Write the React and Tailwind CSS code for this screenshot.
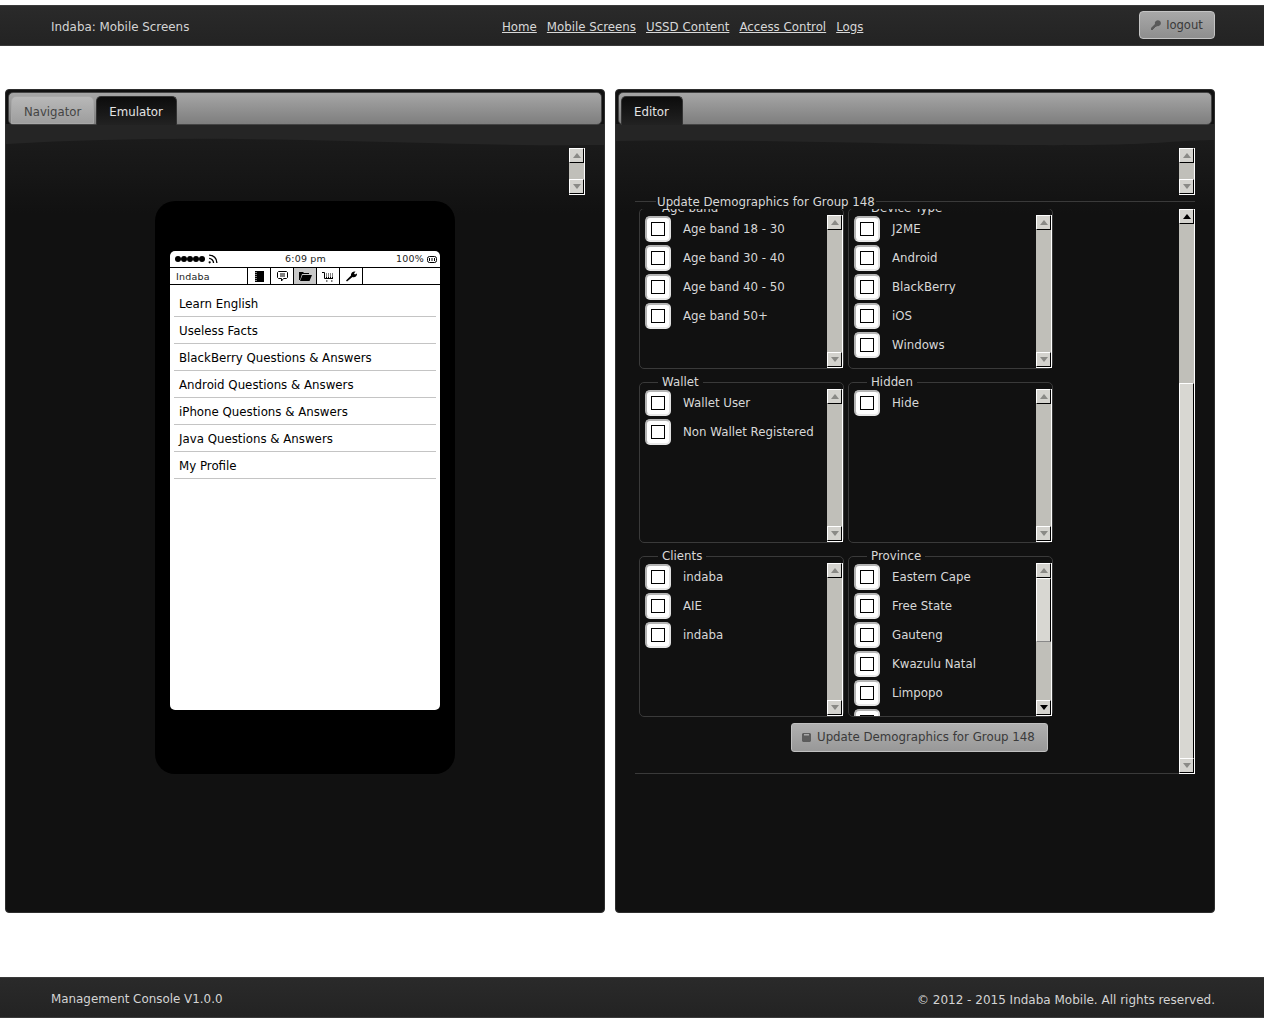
const font = { fontFamily: '"DejaVu Sans", sans-serif' };

function Arrow({ dir, dark }) {
  const cls = dark ? "border-b-black" : "border-b-[#8a8a86]";
  const clsD = dark ? "border-t-black" : "border-t-[#8a8a86]";
  return dir === "up" ? (
    <span className={`w-0 h-0 border-x-[4px] border-x-transparent border-b-[5px] ${cls}`} />
  ) : (
    <span className={`w-0 h-0 border-x-[4px] border-x-transparent border-t-[5px] ${clsD}`} />
  );
}

function SBtn({ dir, dark }) {
  return (
    <div className="h-[15px] w-[15px] shrink-0 flex items-center justify-center bg-[#d4d3ce] border-t border-l border-t-white border-l-white border-r border-b border-r-black border-b-black">
      <Arrow dir={dir} dark={dark} />
    </div>
  );
}

function Scrollbar({ upDark, downDark, thumb, className = "" }) {
  return (
    <div className={`w-[16px] shrink-0 flex flex-col bg-[#c0bfb9] border-r border-b border-white ${className}`}>
      <SBtn dir="up" dark={upDark} />
      {thumb ? <div className="flex-1 flex flex-col">{thumb}</div> : <div className="flex-1" />}
      <SBtn dir="down" dark={downDark} />
    </div>
  );
}

function Check({ label }) {
  return (
    <div className="flex items-center h-[26px] mb-[3px] shrink-0">
      <div className="w-[26px] h-[26px] bg-white rounded-[5px] border-2 border-[#b4b4b4] border-b-[#e8e8e8] border-r-[#e0e0e0] flex items-center justify-center shrink-0">
        <div className="w-[14px] h-[14px] border border-black bg-white" />
      </div>
      <span className="ml-3 mt-[1px] text-[11.8px] text-[#d8d8d8] whitespace-nowrap">{label}</span>
    </div>
  );
}

function Group({ title, items, thumb, downDark }) {
  return (
    <fieldset className="w-[205px] h-[168px] border border-[#3a3a3a] rounded-[5px] pl-[5px] min-w-0">
      <legend className="ml-[13px] px-[4px] text-[11.8px] leading-[15px] text-[#d8d8d8]">{title}</legend>
      <div className="flex h-[153px] -mt-[1px]">
        <div className="flex-1 overflow-hidden pt-[1px] min-w-0">
          {items.map((i, k) => (
            <Check key={k} label={i} />
          ))}
        </div>
        <Scrollbar thumb={thumb} downDark={downDark} />
      </div>
    </fieldset>
  );
}

function PanelTop({ tabs }) {
  return (
    <div className="mx-[2px] mt-[2px] h-[33px] rounded-[5px] border border-[#444] bg-gradient-to-b from-[#a6a6a6] to-[#7e7e7e] flex items-end pl-[2px]">
      {tabs}
    </div>
  );
}

function Tab({ active, children }) {
  return active ? (
    <div className="h-[29px] pl-[12px] pr-[13px] mr-[2px] rounded-t-[5px] bg-gradient-to-b from-[#0c0c0c] to-[#222] border border-b-0 border-[#333] text-[11.8px] leading-[31px] text-[#e4e4e4] -mb-px">
      {children}
    </div>
  ) : (
    <div className="h-[28px] px-[12px] mr-[2px] rounded-t-[5px] bg-gradient-to-b from-[#b8b8b8] to-[#9e9e9e] border border-[#a8a8a8] text-[11.7px] leading-[30px] text-[#444]">
      {children}
    </div>
  );
}

function Panel({ tabs, children, wave }) {
  return (
    <div className="relative w-[600px] h-[824px] bg-[#111] rounded-[4px] border border-[#2e2e2e] overflow-hidden">
      <svg className="absolute left-0 top-[34px]" width="598" height="90" viewBox="0 0 598 90">
        <defs>
          <linearGradient id={`g${wave}`} x1="0" y1="0" x2="0" y2="1">
            <stop offset="0" stopColor="#1b1b1b" />
            <stop offset="1" stopColor="#111111" />
          </linearGradient>
        </defs>
        <rect width="598" height="26" fill="#252525" />
        <path
          d={wave === 1 ? "M0 20 C100 14 200 14 300 16 S500 22 598 21 V90 H0Z" : "M0 17 C150 15 250 20 400 21 S540 17 598 16 V90 H0Z"}
          fill={`url(#g${wave})`}
        />
      </svg>
      <div className="relative">
        <PanelTop tabs={tabs} />
        {children}
      </div>
    </div>
  );
}

const Icon = {
  book: (
    <svg width="11" height="11" viewBox="0 0 11 11"><rect x="1" y="0" width="9" height="11" fill="#000" /><path d="M2 1v9" stroke="#fff" strokeWidth="1" strokeDasharray="1 1" /></svg>
  ),
  chat: (
    <svg width="11" height="11" viewBox="0 0 11 11" fill="none" stroke="#000"><path d="M1.5.5h8l1 1v5l-1 1H6.5L4.5 10V7.5h-3l-1-1v-5z" /><path d="M3 3h5M3 5h5" /></svg>
  ),
  folder: (
    <svg width="13" height="10" viewBox="0 0 13 10"><path d="M0 1h4l1 1h5v1H3L1 9H0z" fill="#000" /><path d="M3.5 4H13l-2.5 6H1z" fill="#000" /></svg>
  ),
  cart: (
    <svg width="12" height="11" viewBox="0 0 12 11" fill="none" stroke="#000" strokeWidth="1"><path d="M0 1.5h2.5v6H11" /><path d="M4 3h8M4 5h8M4 6.5h7" strokeDasharray="1 1" /><path d="M4 10h1.5M9 10h1.5" /></svg>
  ),
  wrench: (
    <svg width="11" height="11" viewBox="0 0 11 11"><path d="M1 10.5 0 9.5l5-5C4.5 2.5 6.5 0 9.5.5L8 2.5 9 3.5l2-1c.3 3-2.5 4.5-4.5 3.5z" fill="#000" /></svg>
  ),
};

function Phone() {
  const items = ["Learn English", "Useless Facts", "BlackBerry Questions & Answers", "Android Questions & Answers", "iPhone Questions & Answers", "Java Questions & Answers", "My Profile"];
  const cell = "w-[23px] h-full border-r border-black flex items-center justify-center";
  return (
    <div className="ml-[149px] mt-[6px] w-[300px] h-[573px] rounded-[20px] bg-black pt-[50px] px-[15px]">
      <div className="w-[270px] h-[459px] bg-white rounded-[5px] overflow-hidden text-black">
        <div className="h-[16px] flex items-center justify-between pl-[5px] pr-[3px] relative text-[9.5px] tracking-[0.2px] text-[#222]">
          <div className="flex items-center gap-[3px]">
            <div className="flex">
              {[0, 1, 2, 3, 4].map((i) => (
                <span key={i} className="w-[6px] h-[6px] rounded-full bg-black" />
              ))}
            </div>
            <svg width="10" height="10" viewBox="0 0 9 9" fill="none" stroke="#000" strokeWidth="1.2"><path d="M1 1c4 0 7 3 7 7M1 4c2 0 4 2 4 4" /><circle cx="1.5" cy="7.5" r="1" fill="#000" stroke="none" /></svg>
          </div>
          <span className="absolute left-[115px]">6:09 pm</span>
          <div className="flex items-center gap-[3px]">
            <span>100%</span>
            <svg width="10" height="7" viewBox="0 0 10 7" fill="none" stroke="#000"><rect x=".5" y=".5" width="9" height="6" rx="2" /><path d="M2.5 2v3M5 2v3M7.5 2v3" /></svg>
          </div>
        </div>
        <div className="h-[18px] border-y border-black flex items-stretch text-[9.5px] tracking-[0.2px] text-[#222]">
          <div className="w-[78px] border-r border-black pl-[6px] leading-[17px]">Indaba</div>
          <div className={cell}>{Icon.book}</div>
          <div className={cell}>{Icon.chat}</div>
          <div className={`${cell} bg-[#c8c8c8]`}>{Icon.folder}</div>
          <div className={cell}>{Icon.cart}</div>
          <div className={cell}>{Icon.wrench}</div>
        </div>
        <div className="px-[4px] pt-[5px]">
          {items.map((t) => (
            <div key={t} className="h-[27px] border-b border-[#c4c4c4] pl-[5px] text-[11.8px] leading-[28px] text-black">
              {t}
            </div>
          ))}
        </div>
      </div>
    </div>
  );
}

function Key() {
  return (
    <svg width="10" height="10" viewBox="0 0 10 10"><path d="M0 10V8l4-4a3 3 0 1 1 2 2L5 7H4v1H3v1H2v1z" fill="#5a5a5a" /></svg>
  );
}

function Save() {
  return (
    <svg width="9" height="9" viewBox="0 0 9 9"><path d="M0 1l1-1h7l1 1v7l-1 1H1L0 8z" fill="#5c5c5c" /><rect x="2" y="1" width="5" height="1.5" fill="#a8a8a8" /></svg>
  );
}

function Bar({ left, center, right }) {
  return (
    <div className="h-[41px] bg-gradient-to-b from-[#2a2a2a] to-[#232323] border-y border-[#3a3a3a] flex items-center justify-between pl-[51px] pr-[49px] relative">
      <span className="text-[11.9px] text-[#d4d4d4] mt-[5px]">{left}</span>
      {center}
      {right}
    </div>
  );
}

export default function App() {
  const links = ["Home", "Mobile Screens", "USSD Content", "Access Control", "Logs"];
  return (
    <div className="w-[1264px] h-[1023px] bg-white overflow-hidden pt-[5px]" style={font}>
      <Bar
        left="Indaba: Mobile Screens"
        center={
          <div className="absolute left-[502px] top-[13px] flex gap-[10px]">
            {links.map((l) => (
              <a key={l} className="text-[11.8px] text-[#d8d8d8] underline">{l}</a>
            ))}
          </div>
        }
        right={
          <div className="h-[28px] w-[76px] -mt-[2px] rounded-[4px] border border-[#c4c4c4] bg-gradient-to-b from-[#a8a8a8] to-[#8e8e8e] flex items-center justify-center gap-[5px] text-[11.6px] text-[#3a3a3a]">
            <Key />
            <span className="mt-[3px]">logout</span>
          </div>
        }
      />
      <div className="flex gap-[10px] pl-[5px] mt-[43px]">
        <Panel wave={1} tabs={<><Tab>Navigator</Tab><Tab active>Emulator</Tab></>}>
          <div className="flex justify-end pr-[19px] mt-[23px] h-[47px]">
            <Scrollbar />
          </div>
          <Phone />
        </Panel>
        <Panel wave={2} tabs={<Tab active>Editor</Tab>}>
          <div className="flex justify-end pr-[19px] mt-[23px] h-[47px]">
            <Scrollbar />
          </div>
          <fieldset className="ml-[19px] w-[560px] h-[580px] border-y border-[#3a3a3a] min-w-0 -mt-[1px]">
            <legend className="ml-[21px] px-[1px] text-[11.8px] leading-[15px] text-[#d8d8d8] relative top-[1px]">Update Demographics for Group 148</legend>
            <div className="flex h-[565px]">
              <div className="flex-1 overflow-hidden min-w-0 pl-[4px]">
                <div className="-mt-[8px] grid grid-cols-[205px_205px] gap-x-[4px] gap-y-[6px] w-[414px]">
                  <Group title="Age band" items={["Age band 18 - 30", "Age band 30 - 40", "Age band 40 - 50", "Age band 50+"]} />
                  <Group title="Device Type" items={["J2ME", "Android", "BlackBerry", "iOS", "Windows"]} />
                  <Group title="Wallet" items={["Wallet User", "Non Wallet Registered"]} />
                  <Group title="Hidden" items={["Hide"]} />
                  <Group title="Clients" items={["indaba", "AIE", "indaba"]} />
                  <Group
                    title="Province"
                    items={["Eastern Cape", "Free State", "Gauteng", "Kwazulu Natal", "Limpopo", ""]}
                    downDark
                    thumb={<div className="h-[64px] bg-[#d8d7d2] border-r border-b border-r-black border-b-[#888] border-t border-t-white border-l border-l-white" />}
                  />
                </div>
                <div className="ml-[152px] mt-[6px] h-[29px] w-[257px] rounded-[3px] border border-[#c0c0c0] bg-gradient-to-b from-[#b0b0b0] to-[#989898] flex items-center pl-[10px] gap-[6px] text-[11.8px] text-[#3a3a3a] whitespace-nowrap">
                  <Save />
                  <span>Update Demographics for Group 148</span>
                </div>
              </div>
              <Scrollbar
                upDark
                thumb={
                  <>
                    <div className="h-[159px] shrink-0" />
                    <div className="flex-1 bg-[#d8d7d2] border-t border-l border-r border-t-white border-l-white border-r-black" />
                  </>
                }
              />
            </div>
          </fieldset>
        </Panel>
      </div>
      <div className="mt-[64px]">
        <Bar
          left="Management Console V1.0.0"
          right={<span className="text-[12px] text-[#d4d4d4] mt-[5px]">© 2012 - 2015 Indaba Mobile. All rights reserved.</span>}
        />
      </div>
    </div>
  );
}
